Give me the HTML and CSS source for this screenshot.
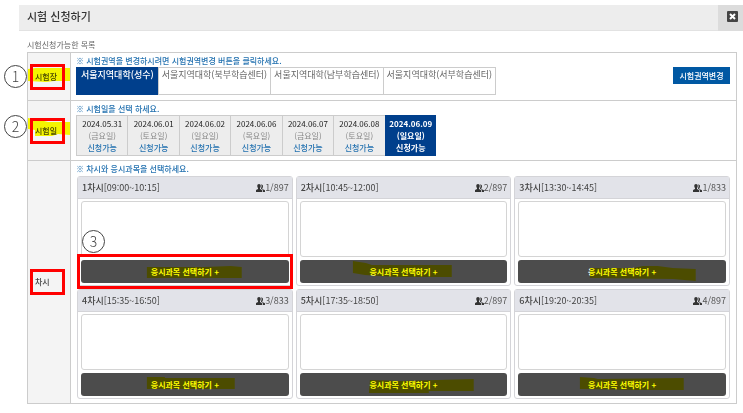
FILE: index.html
```html
<!DOCTYPE html>
<html lang="ko">
<head>
    <meta charset="UTF-8">
    <title>시험 신청하기</title>
    <meta name="viewport" content="width=device-width, initial-scale=1.0">
    <link rel="stylesheet" href="styles.css">
</head>
<body>
<svg class="defs" width="0" height="0" aria-hidden="true">
    <symbol id="people" viewBox="0 0 18 16">
        <path d="M6 0c2.200 0 3.500 1.600 3.500 4 0 2-.8 3.400-1.500 4.200v2l3 1.300c.7.400 1 .9 1 1.700V16H0v-2.800c0-.8.3-1.300 1-1.700l3-1.300v-2C3.300 7.400 2.500 6 2.500 4c0-2.400 1.300-4 3.500-4z"/>
        <path d="M10 1c2.400-.6 4 1 4 3.600 0 1.800-.6 3-1.400 3.800v1.500l4.400 2c.7.400 1 .8 1 1.500V16h-4.500v-3.500c0-.9-.5-1.500-1.300-1.900L10 9.400V8.200c.7-1 1.200-2.300 1.200-4 0-1.300-.5-2.400-1.200-3.200z"/>
    </symbol>
</svg>

<header class="top">
    <h1>시험 신청하기</h1>
    <button class="close" aria-label="닫기">
        <svg viewBox="0 0 11 11">
            <rect width="11" height="11" rx="1" fill="#444"/>
            <path d="M3 3l5 5M8 3l-5 5" stroke="#fff" stroke-width="2"/>
        </svg>
    </button>
</header>

<main>
    <table class="apply">
        <caption>시험신청가능한 목록</caption>
        <tbody>
        <!-- 시험장 -->
        <tr class="row-place">
            <th scope="row">
                <div class="label">
                    시험장
                    <svg class="mark" viewBox="0 0 42 26"><path d="M0 5l8-1h34v13H26l-8 1-18-1z"/></svg>
                    <span class="box"></span>
                    <span class="num">1</span>
                </div>
            </th>
            <td>
                <p class="guide">※ 시험권역을 변경하시려면 시험권역변경 버튼을 클릭하세요.</p>
                <div class="place">
                    <div class="tabs">
                        <button class="on">서울지역대학(성수)</button>
                        <button>서울지역대학(북부학습센터)</button>
                        <button>서울지역대학(남부학습센터)</button>
                        <button>서울지역대학(서부학습센터)</button>
                    </div>
                    <button class="change">시험권역변경</button>
                </div>
            </td>
        </tr>
        <!-- 시험일 -->
        <tr class="row-date">
            <th scope="row">
                <div class="label">
                    시험일
                    <svg class="mark" viewBox="0 0 42 26"><path d="M0 0l12 2 8 2h22v13l-12-1-6 2H7V12l-7-1z"/></svg>
                    <span class="box"></span>
                    <span class="num">2</span>
                </div>
            </th>
            <td>
                <p class="guide">※ 시험일을 선택 하세요.</p>
                <div class="dates">
                    <button>2024.05.31<span>(금요일)</span><em>신청가능</em></button>
                    <button>2024.06.01<span>(토요일)</span><em>신청가능</em></button>
                    <button>2024.06.02<span>(일요일)</span><em>신청가능</em></button>
                    <button>2024.06.06<span>(목요일)</span><em>신청가능</em></button>
                    <button>2024.06.07<span>(금요일)</span><em>신청가능</em></button>
                    <button>2024.06.08<span>(토요일)</span><em>신청가능</em></button>
                    <button class="on">2024.06.09<span>(일요일)</span><em>신청가능</em></button>
                </div>
            </td>
        </tr>
        <!-- 차시 -->
        <tr class="row-time">
            <th scope="row">
                <div class="label">
                    차시
                    <span class="box"></span>
                </div>
            </th>
            <td>
                <p class="guide">※ 차시와 응시과목을 선택하세요.</p>
                <div class="cards">
                    <section class="card">
                        <h2><b>1차시</b>[09:00~10:15]<span class="count"><svg><use href="#people"/></svg>1/897</span></h2>
                        <div class="subjects"></div>
                        <div class="pick">
                            <button>응시과목 선택하기 +</button>
                            <svg class="mark" viewBox="0 0 208 23"><path d="M66 7h57l27-1 11 1v11H66z"/></svg>
                            <span class="box"></span>
                            <span class="num">3</span>
                        </div>
                    </section>
                    <section class="card">
                        <h2><b>2차시</b>[10:45~12:00]<span class="count"><svg><use href="#people"/></svg>2/897</span></h2>
                        <div class="subjects"></div>
                        <div class="pick">
                            <button>응시과목 선택하기 +</button>
                            <svg class="mark" viewBox="0 0 208 23"><path d="M53 1l13 2 6 2h80v12H95l-30-2-12-2z"/></svg>
                        </div>
                    </section>
                    <section class="card">
                        <h2><b>3차시</b>[13:30~14:45]<span class="count"><svg><use href="#people"/></svg>1/833</span></h2>
                        <div class="subjects"></div>
                        <div class="pick">
                            <button>응시과목 선택하기 +</button>
                            <svg class="mark" viewBox="0 0 208 23"><path d="M72 8h43l10-2h15l15 2 23 1v12l-23-2-83-1z"/></svg>
                        </div>
                    </section>
                    <section class="card">
                        <h2><b>4차시</b>[15:35~16:50]<span class="count"><svg><use href="#people"/></svg>3/833</span></h2>
                        <div class="subjects"></div>
                        <div class="pick">
                            <button>응시과목 선택하기 +</button>
                            <svg class="mark" viewBox="0 0 208 23"><path d="M66 4h18v1h70v11H66z"/></svg>
                        </div>
                    </section>
                    <section class="card">
                        <h2><b>5차시</b>[17:35~18:50]<span class="count"><svg><use href="#people"/></svg>2/897</span></h2>
                        <div class="subjects"></div>
                        <div class="pick">
                            <button>응시과목 선택하기 +</button>
                            <svg class="mark" viewBox="0 0 208 23"><path d="M70 7l30 1 74-2v12h-45v2H69z"/></svg>
                        </div>
                    </section>
                    <section class="card">
                        <h2><b>6차시</b>[19:20~20:35]<span class="count"><svg><use href="#people"/></svg>4/897</span></h2>
                        <div class="subjects"></div>
                        <div class="pick">
                            <button>응시과목 선택하기 +</button>
                            <svg class="mark" viewBox="0 0 208 23"><path d="M62 4l14 1 4 1 86-1v12h-50L62 16z"/></svg>
                        </div>
                    </section>
                </div>
            </td>
        </tr>
        </tbody>
    </table>
</main>
</body>
</html>
```
FILE: styles.css
```css
* {
    box-sizing: border-box;
}

body {
    margin: 0;
    padding: 5px 0 8px 19px;
    font-family: "Noto Sans CJK KR", "Noto Sans", sans-serif;
    font-size: 8px;
    line-height: 12px;
    color: #444;
    background: white;
}

h1, h2, p {
    margin: 0;
}

button {
    margin: 0;
    padding: 0;
    border: none;
    font: inherit;
    color: inherit;
    cursor: pointer;
}

.defs {
    position: absolute;
}

/* Header */
.top {
    display: flex;
    justify-content: space-between;
    height: 26px;
    padding-left: 8px;
    background: #ededed;
    border-bottom: 1px solid #e2e2e2;
}

.top h1 {
    font-size: 11px;
    font-weight: 500;
    line-height: 23px;
    color: #333;
}

.close {
    width: 25px;
    height: 26px;
    padding: 0 5px 3px 9px;
    background: #dcdcdc;
}

.close svg {
    display: block;
    width: 11px;
    height: 11px;
}

main {
    padding: 8px 6px 0 8px;
}

/* Table */
.apply {
    width: 100%;
    border-collapse: collapse;
}

.apply caption {
    padding-bottom: 1px;
    text-align: left;
    color: #666;
}

.apply th, .apply td {
    border: 1px solid #ccc;
    padding: 0;
}

.apply th {
    width: 43px;
    background: #f4f4f4;
    font-weight: 500;
    text-align: left;
}

.apply td {
    padding: 2px 6px 4px 5px;
    vertical-align: top;
}

.apply .row-place td {
    padding-bottom: 5px;
}

.label {
    position: relative;
    padding-left: 7px;
    line-height: 26px;
}

.guide {
    font-weight: 500;
    color: #2472b0;
}

.place {
    display: flex;
    justify-content: space-between;
}

.tabs {
    display: flex;
}

.tabs button {
    display: flex;
    height: 28px;
    margin-right: -1px;
    padding: 1px 3px;
    border: 1px solid #ccc;
    background: white;
    font-size: 9px;
    color: #666;
}

.tabs .on {
    padding: 1px 4px;
    background: #003f8c;
    border-color: #003f8c;
    font-weight: 500;
    color: white;
}

.change {
    width: 57px;
    height: 17px;
    background: #0058a3;
    font-weight: 500;
    color: white;
}

.dates {
    display: grid;
    grid-template-columns: repeat(7, 1fr);
    max-width: 360px;
}

.dates button {
    height: 41px;
    border: 1px solid #ccc;
    border-right: none;
    background: #ededed;
    color: #222;
}

.dates span, .dates em {
    display: block;
    font-style: normal;
}

.dates span {
    color: #888;
}

.dates em {
    font-weight: 500;
    color: #2472b0;
}

.dates .on, .dates .on span, .dates .on em {
    background: #003f8c;
    border-color: #003f8c;
    font-weight: 700;
    color: white;
}

/* Cards */
.cards {
    display: grid;
    grid-template-columns: repeat(3, 1fr);
    gap: 3px;
    padding: 1px 0 0 1px;
}

.card {
    border: 1px solid #d4d4d8;
    border-radius: 3px;
    background: white;
}

.card h2 {
    display: flex;
    padding: 0 3px 0 4px;
    background: #e2e3e9;
    border-bottom: 1px solid #d4d4d8;
    font-size: 9px;
    font-weight: 400;
    line-height: 21px;
}

.card b {
    font-weight: 500;
}

.count {
    margin-left: auto;
    color: #555;
}

.count svg {
    width: 9px;
    height: 8px;
    fill: #333;
    vertical-align: -1px;
}

.subjects {
    height: 56px;
    margin: 2px 3px 3px;
    border: 1px solid #d4d4d4;
    border-radius: 3px;
}

.pick {
    position: relative;
    margin: 0 3px 2px;
}

.pick button {
    display: block;
    width: 100%;
    height: 23px;
    border-radius: 3px;
    background: #4c4c4c;
    font-weight: 700;
    color: white;
}

/* Highlighter, red frames and step numbers lie over the form */
.mark {
    position: absolute;
    inset: 0;
    width: 100%;
    height: 100%;
    fill: #ff0;
    mix-blend-mode: multiply;
    pointer-events: none;
}

.box {
    position: absolute;
    inset: 0 5px 0 2px;
    border: 3px solid red;
    pointer-events: none;
}

.num {
    position: absolute;
    top: 1px;
    left: -24px;
    width: 23px;
    height: 23px;
    border: 1px solid #444;
    border-radius: 50%;
    background: white;
    font-size: 14px;
    font-weight: 300;
    line-height: 20px;
    text-align: center;
}

.row-date .num {
    top: -3px;
}

.pick .box {
    inset: -6px -4px;
}

.pick .num {
    top: -30px;
    left: 1px;
}
```
